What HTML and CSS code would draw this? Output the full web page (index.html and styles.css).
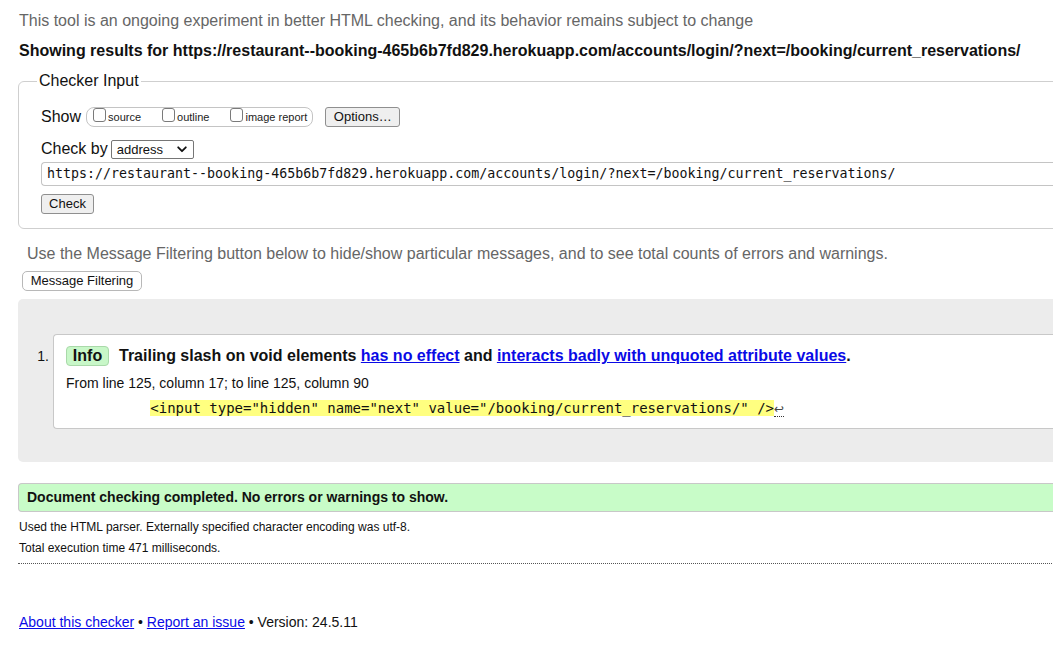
FILE: index.html
```html
<!DOCTYPE html>
<html lang="en">
<head>
<meta charset="utf-8">
<title>Showing results for https://restaurant--booking-465b6b7fd829.herokuapp.com/accounts/login/?next=/booking/current_reservations/ - Nu Html Checker</title>
<link rel="stylesheet" href="styles.css">
</head>
<body>
<div class="page">
  <p class="intro">This tool is an ongoing experiment in better HTML checking, and its behavior remains subject to change</p>
  <p class="showing">Showing results for https://restaurant--booking-465b6b7fd829.herokuapp.com/accounts/login/?next=/booking/current_reservations/</p>

  <fieldset class="checker">
    <legend class="checker-legend">Checker Input</legend>
    <div class="show-row">
      <span class="label">Show</span>
      <span class="show-opts">
        <span class="opt"><span class="cbox"></span>source</span>
        <span class="opt"><span class="cbox"></span>outline</span>
        <span class="opt"><span class="cbox"></span>image report</span>
      </span>
      <span class="btn btn-options">Options…</span>
    </div>
    <div class="checkby-row">
      <span class="label">Check by</span>
      <span class="select">address
        <svg class="chev" width="10" height="7" viewBox="0 0 10 7"><path d="M1.2 1.3 L5 5.2 L8.8 1.3" fill="none" stroke="#111" stroke-width="1.8" stroke-linecap="round" stroke-linejoin="round"/></svg>
      </span>
    </div>
    <div class="url">https://restaurant--booking-465b6b7fd829.herokuapp.com/accounts/login/?next=/booking/current_reservations/</div>
    <span class="btn btn-check">Check</span>
  </fieldset>

  <p class="filter-note">Use the Message Filtering button below to hide/show particular messages, and to see total counts of errors and warnings.</p>
  <span class="btn btn-filter">Message Filtering</span>

  <div class="results">
    <div class="msg-item">
      <span class="msg-num">1.</span>
      <div class="msg">
        <p class="msg-title"><span class="badge">Info</span>Trailing slash on void elements <a href="#">has no effect</a> and <a href="#">interacts badly with unquoted attribute values</a>.</p>
        <p class="location">From line 125, column 17; to line 125, column 90</p>
        <p class="extract"><code>          <b class="hl">&lt;input type="hidden" name="next" value="/booking/current_reservations/" /&gt;</b><span class="lf">↩</span></code></p>
      </div>
    </div>
  </div>

  <p class="success">Document checking completed. No errors or warnings to show.</p>
  <p class="details first">Used the HTML parser. Externally specified character encoding was utf-8.</p>
  <p class="details">Total execution time 471 milliseconds.</p>
  <div class="dotted"></div>

  <p class="footer"><a href="#">About this checker</a> • <a href="#">Report an issue</a> • Version: 24.5.11</p>
</div>
</body>
</html>
```

FILE: styles.css
```css
html, body {
  margin: 0;
  padding: 0;
  overflow: hidden;
  background: #fff;
}

body {
  font-family: "Liberation Sans", Arial, sans-serif;
  color: #000;
}

.page {
  width: 1120px;
  padding: 11px 0 0 18px;
}

p {
  margin: 0;
}

a {
  color: #0a0ae6;
  text-decoration: underline;
}

.intro {
  font-size: 16px;
  line-height: 20px;
  color: #666;
  padding-left: 1px;
}

.showing {
  margin-top: 10px;
  font-size: 16px;
  line-height: 20px;
  font-weight: bold;
  color: #111;
  padding-left: 1px;
}

/* Checker input */
.checker {
  margin: 11px 0 0 0;
  padding: 16px 22px 14px 22px;
  border: 1px solid #cfcfcf;
  border-radius: 6px;
  min-width: 0;
}

.checker-legend {
  font-size: 16px;
  line-height: 18px;
  padding: 0 2px;
  margin-left: -4px;
  color: #111;
}

.label {
  font-size: 16px;
  line-height: 20px;
  color: #111;
}

.show-row {
  display: flex;
  align-items: center;
  height: 21px;
}

.show-opts {
  display: inline-flex;
  align-items: center;
  margin-left: 5px;
  height: 18px;
  padding: 0 5px 0 6px;
  border: 1px solid #c4c4c4;
  border-radius: 8px;
  font-size: 11px;
  color: #222;
}

.opt {
  display: inline-flex;
  align-items: center;
  margin-right: 21px;
}

.opt:last-child {
  margin-right: 0;
}

.cbox {
  display: inline-block;
  width: 11px;
  height: 12px;
  border: 1px solid #7a7a7a;
  border-radius: 3px;
  margin-right: 2px;
  position: relative;
  top: -2px;
  background: #fff;
}

.btn {
  display: inline-block;
  box-sizing: border-box;
  font-size: 13px;
  line-height: 18px;
  height: 20px;
  padding: 0 8px;
  border: 1px solid #8f8f8f;
  border-radius: 3px;
  background: #efefef;
  color: #111;
}

.btn-options {
  margin-left: 12px;
  width: 75px;
  text-align: center;
  padding: 0;
}

.checkby-row {
  display: flex;
  align-items: center;
  height: 20px;
  margin-top: 12px;
}

.select {
  display: inline-flex;
  align-items: center;
  justify-content: space-between;
  box-sizing: border-box;
  width: 83px;
  height: 19px;
  margin-left: 3px;
  padding: 0 6px 0 5px;
  border: 1px solid #767676;
  border-radius: 2px;
  font-size: 13px;
  line-height: 17px;
  background: #fff;
  color: #111;
}

.url {
  margin-top: 3px;
  box-sizing: border-box;
  height: 24px;
  padding: 0 5px;
  border: 1px solid #c4c4c4;
  border-radius: 4px 0 0 4px;
  border-right: none;
  font-family: "DejaVu Sans Mono", monospace;
  font-size: 13.3px;
  line-height: 22px;
  color: #111;
  white-space: nowrap;
  overflow: hidden;
  margin-right: -30px;
}

.btn-check {
  margin-top: 8px;
  width: 53px;
  text-align: center;
  padding: 0;
}

.filter-note {
  margin-top: 15px;
  padding-left: 9px;
  font-size: 16px;
  line-height: 20px;
  color: #666;
}

.btn-filter {
  margin: 7px 0 0 4px;
  width: 120px;
  text-align: center;
  padding: 0;
  background: #fff;
  border-color: #b8b8b8;
  border-radius: 5px;
}

/* Results */
.results {
  margin-top: 8px;
  padding: 35px 0 33px 0;
  background: #ececec;
  border-radius: 5px 0 0 5px;
}

.msg-item {
  display: flex;
  align-items: flex-start;
}

.msg-num {
  flex: none;
  width: 31px;
  padding: 12px 4px 0 0;
  text-align: right;
  font-size: 14px;
  line-height: 20px;
  color: #111;
}

.msg {
  flex: 1;
  background: #fff;
  border: 1px solid #c8c8c8;
  border-radius: 4px 0 0 4px;
  border-right: none;
  padding: 11px 12px 10px 12px;
}

.msg-title {
  font-size: 16px;
  line-height: 20px;
  font-weight: bold;
  color: #111;
}

.badge {
  display: inline-block;
  box-sizing: border-box;
  height: 20px;
  width: 43px;
  text-align: center;
  line-height: 18px;
  padding: 0;
  margin-right: 10px;
  background: #c8f7c8;
  border: 1px solid #a9d9a9;
  border-radius: 4px;
  vertical-align: top;
}

.location {
  margin-top: 9px;
  font-size: 14px;
  line-height: 16px;
  color: #111;
}

.extract {
  margin-top: 8px;
  line-height: 17px;
  white-space: pre;
}

.extract code {
  font-family: "DejaVu Sans Mono", monospace;
  font-size: 14px;
  line-height: 17px;
  color: #111;
}

.hl {
  font-weight: normal;
  background: #ffff80;
}

.lf {
  font-family: "DejaVu Sans", sans-serif;
  font-size: 12px;
  color: #444;
  border-bottom: 1px dotted #333;
}

/* Bottom */
.success {
  margin-top: 21px;
  padding: 5px 8px;
  border: 1px solid #c8c8c8;
  border-radius: 4px 0 0 4px;
  border-right: none;
  background: #c8fcc8;
  font-size: 14px;
  line-height: 17px;
  font-weight: bold;
  color: #111;
}

.details {
  margin-top: 5px;
  padding-left: 1px;
  font-size: 12px;
  line-height: 16px;
  color: #111;
}

.details.first {
  margin-top: 7px;
}

.dotted {
  margin-top: 7px;
  border-top: 1px dotted #555;
}

.footer {
  margin-top: 49px;
  padding-left: 1px;
  font-size: 14px;
  line-height: 18px;
  color: #111;
}
```
